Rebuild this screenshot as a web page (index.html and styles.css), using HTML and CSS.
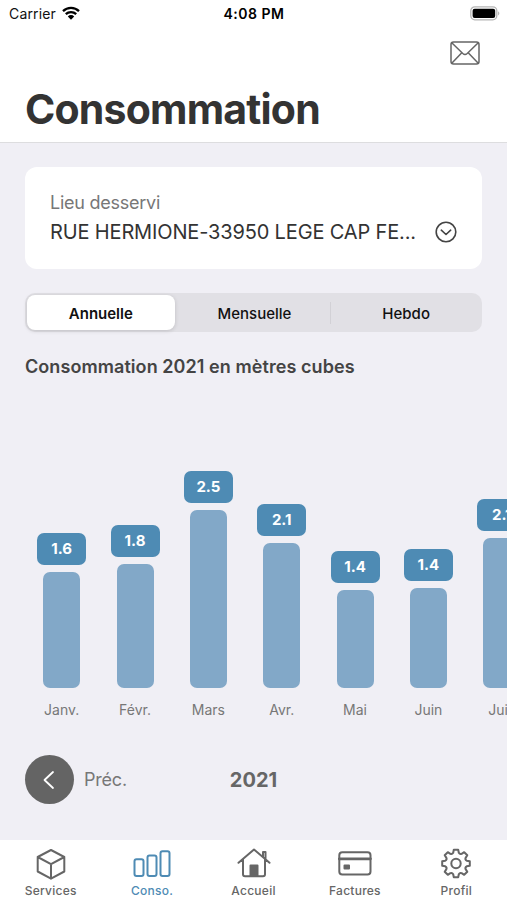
FILE: index.html
```html
<!DOCTYPE html>
<html lang="fr">
<head>
    <meta charset="UTF-8">
    <meta name="viewport" content="width=device-width, initial-scale=1.0">
    <title>Consommation</title>
    <link rel="stylesheet" href="styles.css">
</head>
<body>
    <header class="header">
        <div class="status-bar">
            <div class="carrier">
                <span>Carrier</span>
                <svg width="18" height="14" viewBox="0 0 18 14">
                    <path d="M1 5.2a11.5 11.5 0 0 1 16 0M3.8 8.2a7.5 7.5 0 0 1 10.4 0" fill="none" stroke="#000" stroke-width="2.3"/>
                    <path d="M9 13.8L5.8 10.4a4.6 4.6 0 0 1 6.4 0z" fill="#000"/>
                </svg>
            </div>
            <div class="time">4:08 PM</div>
            <div class="battery">
                <svg width="31" height="15" viewBox="0 0 31 15">
                    <rect x="0.8" y="0.8" width="26" height="13" rx="4" fill="#fff" stroke="#b5b5b5" stroke-width="1.3"/>
                    <rect x="2.6" y="2.7" width="22.6" height="9.4" rx="2" fill="#000"/>
                    <path d="M28.2 5.2q2.2 2.1 0 4.2z" fill="#aaa"/>
                </svg>
            </div>
        </div>
        <div class="toolbar">
            <svg width="30" height="24" viewBox="0 0 30 24" fill="none" stroke="#666" stroke-width="1.5" stroke-linejoin="round">
                <rect x="1" y="1" width="28" height="22" rx="2.5"/>
                <path d="M2 2l10.8 10.5q2.2 2 4.4 0L28 2M2 22l9.8-10.3M28 22l-9.8-10.3"/>
            </svg>
        </div>
        <h1>Consommation</h1>
    </header>

    <main class="content">
        <div class="card">
            <div class="card-label">Lieu desservi</div>
            <div class="card-row">
                <span class="address">RUE HERMIONE-33950 LEGE CAP FE...</span>
                <svg width="22" height="22" viewBox="0 0 22 22" fill="none" stroke="#444" stroke-width="1.6" stroke-linecap="round" stroke-linejoin="round">
                    <circle cx="11" cy="11" r="9.8"/>
                    <path d="M6.3 9.2l4.7 4.3 4.7-4.3"/>
                </svg>
            </div>
        </div>

        <div class="segments">
            <div class="segment active">Annuelle</div>
            <div class="segment">Mensuelle</div>
            <div class="segment divided">Hebdo</div>
        </div>

        <h2>Consommation 2021 en mètres cubes</h2>

        <div class="chart">
            <div class="column">
                <span class="value">1.6</span>
                <div class="bar" style="height: 116.5px"></div>
                <span class="month">Janv.</span>
            </div>
            <div class="column">
                <span class="value">1.8</span>
                <div class="bar" style="height: 124.5px"></div>
                <span class="month">Févr.</span>
            </div>
            <div class="column">
                <span class="value">2.5</span>
                <div class="bar" style="height: 178px"></div>
                <span class="month">Mars</span>
            </div>
            <div class="column">
                <span class="value">2.1</span>
                <div class="bar" style="height: 145.5px"></div>
                <span class="month">Avr.</span>
            </div>
            <div class="column">
                <span class="value">1.4</span>
                <div class="bar" style="height: 98px"></div>
                <span class="month">Mai</span>
            </div>
            <div class="column">
                <span class="value">1.4</span>
                <div class="bar" style="height: 100px"></div>
                <span class="month">Juin</span>
            </div>
            <div class="column">
                <span class="value">2.1</span>
                <div class="bar" style="height: 150px"></div>
                <span class="month">Juil.</span>
            </div>
        </div>

        <div class="pager">
            <div class="previous">
                <div class="round-button">
                    <svg width="12" height="20" viewBox="0 0 12 20" fill="none" stroke="#fff" stroke-width="1.8" stroke-linecap="round" stroke-linejoin="round">
                        <path d="M10 2L1.5 10 10 18"/>
                    </svg>
                </div>
                <span>Préc.</span>
            </div>
            <div class="year">2021</div>
        </div>
    </main>

    <nav class="tabs">
        <a class="tab">
            <svg width="34" height="32" viewBox="0 0 34 32">
                <path d="M17 2l13.3 7v14.5L17 30.7 3.7 23.5V9zM3.7 9L17 16.2 30.3 9M17 16.2v14.5"/>
            </svg>
            <span>Services</span>
        </a>
        <a class="tab active">
            <svg width="38" height="32" viewBox="0 0 38 32">
                <rect x="1.5" y="11.3" width="9" height="16.7" rx="2"/>
                <rect x="14.5" y="7.5" width="9" height="20.5" rx="2"/>
                <rect x="27.5" y="3.3" width="9" height="24.7" rx="2"/>
            </svg>
            <span>Conso.</span>
        </a>
        <a class="tab">
            <svg width="34" height="32" viewBox="0 0 34 32">
                <path d="M1.5 14.8L17 1.5l15.5 13.3M6 11.5v14.8q0 2 2 2h18q2 0 2-2V11.5M26 9V4h2.5v7"/>
                <path d="M13.5 28V17.5h7V28z" fill="#666"/>
            </svg>
            <span>Accueil</span>
        </a>
        <a class="tab">
            <svg width="34" height="32" viewBox="0 0 34 32">
                <rect x="1.3" y="4.3" width="31.2" height="22.2" rx="3"/>
                <path d="M1.3 10.8h31.2" stroke-width="2.7"/>
                <rect x="6.5" y="17.5" width="4.5" height="3" fill="#666"/>
            </svg>
            <span>Factures</span>
        </a>
        <a class="tab">
            <svg width="34" height="32" viewBox="-17 -15.500 34 32">
                <path d="M-2.2 -13.8L2.2 -13.8L2.8 -10.7Q3.8 -8.9 5.6 -9.6L8.2 -11.3L11.3 -8.2L9.6 -5.6Q8.9 -3.8 10.7 -2.8L13.8 -2.2L13.8 2.2L10.7 2.8Q8.9 3.8 9.6 5.6L11.3 8.2L8.2 11.3L5.6 9.6Q3.8 8.9 2.8 10.7L2.2 13.8L-2.2 13.8L-2.8 10.7Q-3.8 8.9 -5.6 9.6L-8.2 11.3L-11.3 8.2L-9.6 5.6Q-8.9 3.8 -10.7 2.8L-13.8 2.2L-13.8 -2.2L-10.7 -2.8Q-8.9 -3.8 -9.6 -5.6L-11.3 -8.2L-8.2 -11.3L-5.6 -9.6Q-3.8 -8.9 -2.8 -10.7Z"/>
                <circle r="4.7"/>
            </svg>
            <span>Profil</span>
        </a>
    </nav>
</body>
</html>
```
FILE: styles.css
```css
* {
    box-sizing: border-box;
}

body {
    margin: 0;
    height: 900px;
    display: flex;
    flex-direction: column;
    overflow: hidden;
    background-color: #f0eff5;
    color: #333;
    font-family: Inter, "Liberation Sans", sans-serif;
}

.header {
    height: 143px;
    background-color: #fff;
    border-bottom: 1px solid #dddddf;
}

.status-bar {
    display: grid;
    grid-template-columns: 1fr auto 1fr;
    align-items: center;
    height: 27px;
    padding: 0 6px 0 9px;
    color: #111;
    font-size: 14px;
    letter-spacing: 0.15px;
}

.carrier {
    display: flex;
    align-items: center;
    gap: 6px;
}

.carrier svg {
    margin-bottom: 1px;
}

.time {
    font-weight: 600;
    letter-spacing: 0.5px;
    color: #000;
    margin-right: 2px;
}

.battery {
    display: flex;
    justify-content: flex-end;
    margin-bottom: 1px;
}

.toolbar {
    display: flex;
    justify-content: flex-end;
    padding: 14px 27px 0 0;
    height: 57px;
}

h1 {
    margin: 0;
    padding-left: 25px;
    font-size: 41px;
    line-height: 50px;
    font-weight: 700;
    letter-spacing: -0.8px;
}

.content {
    flex: 1;
    padding: 24px 25px 0;
}

.card {
    height: 102px;
    padding: 25px 25px 0;
    background-color: #fff;
    border-radius: 12px;
}

.card-label {
    color: #777;
    font-size: 18px;
    line-height: 22px;
    letter-spacing: -0.25px;
}

.card-row {
    display: flex;
    align-items: center;
    justify-content: space-between;
    height: 36px;
}

.address {
    font-size: 20px;
    letter-spacing: -0.15px;
    white-space: nowrap;
}

.segments {
    display: grid;
    grid-template-columns: repeat(3, 1fr);
    height: 39px;
    margin-top: 24px;
    padding: 2px 0 2px 2px;
    background-color: #e1e0e5;
    border-radius: 10px;
}

.segment {
    display: flex;
    align-items: center;
    justify-content: center;
    padding-top: 1px;
    color: #111;
    font-size: 15px;
    font-weight: 500;
}

.segment.active {
    background-color: #fff;
    border-radius: 8px;
    box-shadow: 0 1px 4px rgba(0, 0, 0, 0.15);
    font-weight: 600;
    margin-right: 4px;
}

.segment.divided {
    background: linear-gradient(#d2d1d6, #d2d1d6) left center / 1px 22px no-repeat;
}

h2 {
    margin: 23px 0 0;
    font-size: 18px;
    line-height: 24px;
    font-weight: 600;
    letter-spacing: 0.07px;
    color: #444;
}

.chart {
    display: flex;
    align-items: flex-end;
    height: 341px;
    margin-right: -25px;
    overflow: hidden;
}

.column {
    display: flex;
    flex: 0 0 73.35px;
    flex-direction: column;
    align-items: center;
}

.value {
    width: 49px;
    height: 32px;
    margin-bottom: 7px;
    border-radius: 7px;
    background-color: #4e8bb4;
    color: #fff;
    font-size: 15px;
    font-weight: 700;
    line-height: 32px;
    text-align: center;
}

.bar {
    width: 37px;
    border-radius: 7px;
    background-color: #82a8c8;
}

.month {
    margin-top: 11px;
    color: #777;
    font-size: 14px;
    line-height: 21px;
}

.pager {
    display: grid;
    grid-template-columns: 1fr auto 1fr;
    align-items: center;
    margin-top: 35px;
}

.previous {
    display: flex;
    align-items: center;
    gap: 10px;
    color: #777;
    font-size: 18px;
    letter-spacing: -0.2px;
}

.round-button {
    display: flex;
    align-items: center;
    justify-content: center;
    width: 49px;
    height: 49px;
    padding-right: 2px;
    border-radius: 50%;
    background-color: #646464;
}

.year {
    color: #666;
    font-size: 20px;
    font-weight: 700;
}

.tabs {
    display: flex;
    height: 60px;
    padding-top: 8px;
    background-color: #fff;
}

.tab {
    display: flex;
    flex: 1;
    flex-direction: column;
    align-items: center;
    color: #666;
    font-size: 12px;
    font-weight: 500;
    line-height: 20px;
    letter-spacing: 0.25px;
}

.tab span {
    margin-top: 1px;
}

.tab svg {
    flex-shrink: 0;
    fill: none;
    stroke: #666;
    stroke-width: 2;
    stroke-linejoin: round;
    stroke-linecap: round;
}

.tab.active {
    color: #4e8bb4;
}

.tab.active svg {
    stroke: #4e8bb4;
}
```
